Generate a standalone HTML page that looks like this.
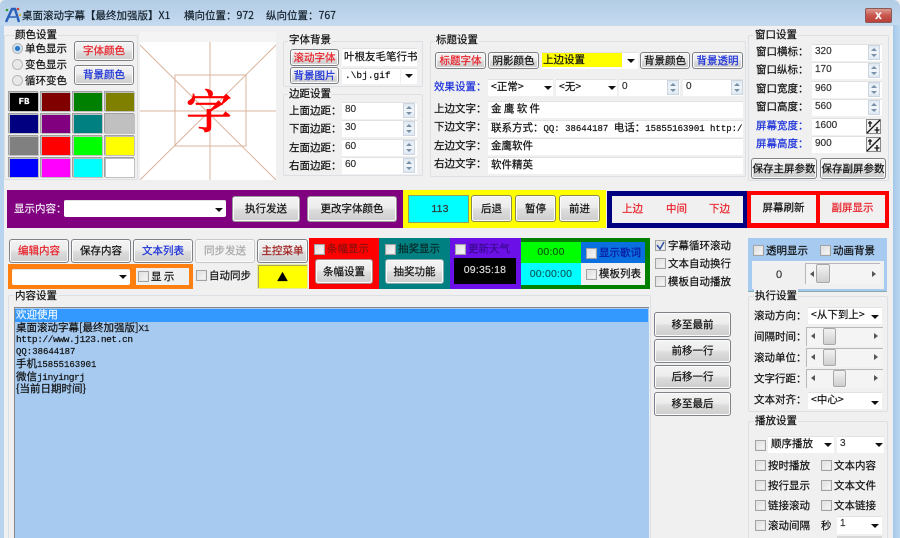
<!DOCTYPE html>
<html><head><meta charset="utf-8">
<style>
html,body{margin:0;padding:0;background:#fff}
#w{position:relative;width:900px;height:538px;overflow:hidden;background:#f0f0f0;font:10.5px/14px "Noto Sans CJK SC","WenQuanYi Zen Hei",sans-serif;color:#111;filter:blur(.3px);-webkit-text-stroke:.2px currentColor}
#w div,#w span.a{position:absolute;box-sizing:border-box;white-space:nowrap}
.tb{left:0;top:0;width:900px;height:26px;background:linear-gradient(#b3cde6,#bdd5ec 60%,#c4daef);border-radius:5px 7px 0 0}
.t{line-height:16px}
.g{border:1px solid #dcdfe3;border-radius:2px}
.lb{background:#f0f0f0;padding:0 1px;line-height:14px;height:14px}
.b{background:linear-gradient(#f3f3f3,#ececec 45%,#dcdcdc 55%,#cdcdcd);border:1px solid #7e8186;border-radius:3px;text-align:center;box-shadow:inset 0 0 0 1px #fbfbfb}
.r{color:#e8212a}.bl{color:#1a2fd8}
.i{background:#fff;box-shadow:inset 0 1px 0 #e2e2e2;padding-left:3px;overflow:hidden}
.n{font-family:"Liberation Sans",sans-serif;font-size:10px;color:#333}
.m{font-family:"Liberation Mono","Noto Sans CJK SC",monospace}
.sp{width:12px;height:15px;background:linear-gradient(#dfe8f2,#f2f6fa 48%,#a8b8c8 50%,#f2f6fa 52%,#dfe8f2);border:1px solid #ccd6e0}
.sp::before{content:"";position:absolute;left:2px;top:2px;border-left:3px solid transparent;border-right:3px solid transparent;border-bottom:3px solid #7890a8}
.sp::after{content:"";position:absolute;left:2px;bottom:2px;border-left:3px solid transparent;border-right:3px solid transparent;border-top:3px solid #7890a8}
.ar{width:0;height:0;border-left:4px solid transparent;border-right:4px solid transparent;border-top:4px solid #111}
.c{width:11px;height:11px;border:1px solid #a3a3a3;background:linear-gradient(135deg,#dcdcdc,#fafafa);box-shadow:inset 0 0 0 1px #e6e6e6;margin:1px 0 0 1px}
.rd{width:11px;height:11px;border-radius:50%;border:1px solid #b8b8b8;background:#e8e8e8;margin:1px 0 0 1px}
.s{background:#f4f4f4;box-shadow:inset 1px 1px 0 #b8b8b8}
.th{background:linear-gradient(#f2f2f2,#cfcfcf);border:1px solid #a8a8a8;border-radius:2px}
.sw{width:28px;height:18px;box-shadow:0 0 0 1px #c0c0c0,-1px -1px 0 1px #a0a0a0}
.d{font-family:"Liberation Sans",sans-serif;font-size:10.5px;letter-spacing:.2px;text-align:center}
</style></head><body><div id="w">
<div class="tb"></div>
<div style="left:0;top:25px;width:4px;height:513px;background:#b9d4ee"></div>
<div style="left:893px;top:25px;width:7px;height:513px;background:linear-gradient(90deg,#a4c8ea,#bcd8f0)"></div>
<svg style="position:absolute;left:4px;top:7px" width="18" height="16"><path d="M2 15L8 2L11 2L15 15" fill="none" stroke="#2a5fb8" stroke-width="2.4"/><path d="M5 10H12" stroke="#2a5fb8" stroke-width="1.5"/><circle cx="3" cy="3" r="1.3" fill="#3a9a3a"/><circle cx="14" cy="2" r="1.3" fill="#d0403a"/><circle cx="16" cy="8" r="1.2" fill="#d8b030"/></svg>
<div class="t" style="left:22px;top:8px;color:#14202c">桌面滚动字幕【最终加强版】X1</div>
<div class="t" style="left:184px;top:8px;color:#14202c">横向位置：972</div>
<div class="t" style="left:266px;top:8px;color:#14202c">纵向位置：767</div>
<div style="left:865px;top:8px;width:27px;height:15px;background:linear-gradient(#dc9a90,#c8564c 50%,#b8403a);border:1px solid #8a5a58;border-radius:2px;color:#fff;font:bold 12px/13px 'Liberation Sans',sans-serif;text-align:center">x</div>

<!-- 颜色设置 -->
<div class="g" style="left:4px;top:35px;width:134px;height:145px"></div>
<div class="lb" style="left:14px;top:28px">颜色设置</div>
<div class="rd" style="left:11px;top:42px;background:radial-gradient(#2a78c8 35%,#cfe0f0 45%)"></div>
<div class="rd" style="left:11px;top:58px"></div>
<div class="rd" style="left:11px;top:74px"></div>
<div class="t" style="left:25px;top:41px">单色显示</div>
<div class="t" style="left:25px;top:57px">变色显示</div>
<div class="t" style="left:25px;top:73px">循环变色</div>
<div class="b r" style="left:74px;top:41px;width:60px;height:20px;line-height:18px">字体颜色</div>
<div class="b bl" style="left:74px;top:65px;width:60px;height:20px;line-height:18px">背景颜色</div>
<div class="sw" style="left:10px;top:93px;background:#000;color:#fff;font:bold 9px/18px 'Liberation Mono',monospace;text-align:center">FB</div>
<div class="sw" style="left:42px;top:93px;background:#800000"></div>
<div class="sw" style="left:74px;top:93px;background:#008000"></div>
<div class="sw" style="left:106px;top:93px;background:#808000"></div>
<div class="sw" style="left:10px;top:115px;background:#000080"></div>
<div class="sw" style="left:42px;top:115px;background:#800080"></div>
<div class="sw" style="left:74px;top:115px;background:#008080"></div>
<div class="sw" style="left:106px;top:115px;background:#c0c0c0"></div>
<div class="sw" style="left:10px;top:137px;background:#808080"></div>
<div class="sw" style="left:42px;top:137px;background:#ff0000"></div>
<div class="sw" style="left:74px;top:137px;background:#00ff00"></div>
<div class="sw" style="left:106px;top:137px;background:#ffff00"></div>
<div class="sw" style="left:10px;top:159px;background:#0000ff"></div>
<div class="sw" style="left:42px;top:159px;background:#ff00ff"></div>
<div class="sw" style="left:74px;top:159px;background:#00ffff"></div>
<div class="sw" style="left:106px;top:159px;background:#fff"></div>

<!-- preview -->
<div style="left:140px;top:32px;width:136px;height:147px;background:#f4f4f4"></div>
<svg style="position:absolute;left:140px;top:42px" width="136" height="138"><rect width="136" height="138" fill="#fff"/><g stroke="#dbb49c" stroke-width="1" fill="none"><path d="M70 0V138M0 69H136M0 3L136 138M136 3L0 138"/><rect x="35" y="33" width="71" height="71"/></g></svg>
<div style="left:182px;top:75px;width:54px;height:68px;color:#f00;font:500 46px/68px 'Noto Serif CJK SC',serif;text-align:center;-webkit-text-stroke:.8px #f00">字</div>

<!-- 字体背景 -->
<div class="g" style="left:283px;top:41px;width:140px;height:46px"></div>
<div class="lb" style="left:288px;top:33px">字体背景</div>
<div class="b r" style="left:290px;top:49px;width:49px;height:17px;line-height:15px">滚动字体</div>
<div class="b bl" style="left:290px;top:67px;width:49px;height:17px;line-height:15px">背景图片</div>
<div class="i" style="left:342px;top:48px;width:75px;height:18px;line-height:17px;padding-left:2px">叶根友毛笔行书</div>
<div class="i m" style="left:342px;top:68px;width:58px;height:16px;line-height:15px;font-size:9.5px">.\bj.gif</div>
<div class="i" style="left:401px;top:68px;width:16px;height:16px"></div>
<div class="ar" style="left:405px;top:74px"></div>
<!-- 边距设置 -->
<div class="g" style="left:283px;top:94px;width:140px;height:82px"></div>
<div class="lb" style="left:288px;top:87px">边距设置</div>
<div class="t" style="left:289px;top:103px">上面边距：</div>
<div class="t" style="left:289px;top:121px">下面边距：</div>
<div class="t" style="left:289px;top:140px">左面边距：</div>
<div class="t" style="left:289px;top:158px">右面边距：</div>
<div class="i n" style="left:342px;top:102px;width:75px;height:17px;line-height:16px">80</div><div class="sp" style="left:403px;top:103px"></div>
<div class="i n" style="left:342px;top:120px;width:75px;height:17px;line-height:16px">30</div><div class="sp" style="left:403px;top:121px"></div>
<div class="i n" style="left:342px;top:139px;width:75px;height:17px;line-height:16px">60</div><div class="sp" style="left:403px;top:140px"></div>
<div class="i n" style="left:342px;top:157px;width:75px;height:17px;line-height:16px">60</div><div class="sp" style="left:403px;top:158px"></div>

<!-- 标题设置 -->
<div class="g" style="left:430px;top:41px;width:316px;height:136px"></div>
<div class="lb" style="left:435px;top:33px">标题设置</div>
<div class="b r" style="left:435px;top:52px;width:51px;height:17px;line-height:15px">标题字体</div>
<div class="b" style="left:488px;top:52px;width:51px;height:17px;line-height:15px">阴影颜色</div>
<div class="i" style="left:542px;top:52px;width:96px;height:17px"></div>
<div style="left:542px;top:53px;width:80px;height:14px;background:#ff0;line-height:14px;padding-left:1px">上边设置</div>
<div class="ar" style="left:627px;top:59px"></div>
<div class="b" style="left:640px;top:52px;width:50px;height:17px;line-height:15px">背景颜色</div>
<div class="b bl" style="left:692px;top:52px;width:51px;height:17px;line-height:15px">背景透明</div>
<div class="t bl" style="left:434px;top:79px">效果设置：</div>
<div class="i" style="left:488px;top:79px;width:65px;height:17px;line-height:16px">&lt;正常&gt;</div><div class="ar" style="left:544px;top:86px"></div>
<div class="i" style="left:556px;top:79px;width:61px;height:17px;line-height:16px">&lt;无&gt;</div><div class="ar" style="left:608px;top:86px"></div>
<div class="i n" style="left:619px;top:79px;width:61px;height:17px;line-height:16px">0</div><div class="sp" style="left:667px;top:80px"></div>
<div class="i n" style="left:683px;top:79px;width:60px;height:17px;line-height:16px">0</div><div class="sp" style="left:731px;top:80px"></div>
<div class="t" style="left:434px;top:101px">上边文字：</div>
<div class="t" style="left:434px;top:119px">下边文字：</div>
<div class="t" style="left:434px;top:138px">左边文字：</div>
<div class="t" style="left:434px;top:156px">右边文字：</div>
<div class="i" style="left:488px;top:101px;width:255px;height:17px;line-height:16px">金 鹰 软 件</div>
<div class="i" style="left:488px;top:120px;width:255px;height:17px;line-height:16px">联系方式：<span class="m" style="font-size:9px">QQ: 38644187 </span>电话：<span class="m" style="font-size:9px">15855163901 http:/.</span></div>
<div class="i" style="left:488px;top:138px;width:255px;height:17px;line-height:16px">金鹰软件</div>
<div class="i" style="left:488px;top:157px;width:255px;height:17px;line-height:16px">软件精英</div>

<!-- 窗口设置 -->
<div class="g" style="left:748px;top:35px;width:141px;height:146px"></div>
<div class="lb" style="left:754px;top:28px">窗口设置</div>
<div class="t" style="left:756px;top:44px">窗口横标：</div>
<div class="t" style="left:756px;top:62px">窗口纵标：</div>
<div class="t" style="left:756px;top:81px">窗口宽度：</div>
<div class="t" style="left:756px;top:99px">窗口高度：</div>
<div class="t bl" style="left:756px;top:118px">屏幕宽度：</div>
<div class="t bl" style="left:756px;top:136px">屏幕高度：</div>
<div class="i n" style="left:812px;top:44px;width:70px;height:17px;line-height:16px">320</div><div class="sp" style="left:868px;top:45px"></div>
<div class="i n" style="left:812px;top:62px;width:70px;height:17px;line-height:16px">170</div><div class="sp" style="left:868px;top:63px"></div>
<div class="i n" style="left:812px;top:81px;width:70px;height:17px;line-height:16px">960</div><div class="sp" style="left:868px;top:82px"></div>
<div class="i n" style="left:812px;top:99px;width:70px;height:17px;line-height:16px">560</div><div class="sp" style="left:868px;top:100px"></div>
<div class="i n" style="left:812px;top:118px;width:54px;height:17px;line-height:16px">1600</div>
<div class="i n" style="left:812px;top:136px;width:54px;height:17px;line-height:16px">900</div>
<svg style="position:absolute;left:866px;top:119px" width="15" height="15"><rect x=".5" y=".5" width="14" height="14" fill="#f0f0f0" stroke="#888"/><path d="M1 14L14 1M4 2V8M2 4H6M11 8V14M8.500 11H13.500" stroke="#111" fill="none" stroke-width="1.300"/></svg>
<svg style="position:absolute;left:866px;top:137px" width="15" height="15"><rect x=".5" y=".5" width="14" height="14" fill="#f0f0f0" stroke="#888"/><path d="M1 14L14 1M4 2V8M2 4H6M11 8V14M8.500 11H13.500" stroke="#111" fill="none" stroke-width="1.300"/></svg>
<div class="b" style="left:751px;top:158px;width:66px;height:21px;line-height:19px">保存主屏参数</div>
<div class="b" style="left:820px;top:158px;width:66px;height:21px;line-height:19px">保存副屏参数</div>

<!-- Row 1 -->
<div style="left:7px;top:190px;width:396px;height:38px;background:#800080"></div>
<div class="t" style="left:14px;top:201px;color:#f0e8f0">显示内容：</div>
<div class="i" style="left:64px;top:200px;width:162px;height:17px;border-radius:2px"></div><div class="ar" style="left:215px;top:208px"></div>
<div class="b" style="left:232px;top:196px;width:68px;height:26px;line-height:24px;border-color:#999">执行发送</div>
<div class="b" style="left:307px;top:196px;width:90px;height:26px;line-height:24px;border-color:#999">更改字体颜色</div>
<div style="left:403px;top:190px;width:203px;height:38px;background:#ff0"></div>
<div class="d" style="left:408px;top:195px;width:61px;height:28px;background:#0ff;border:1px solid #90a060;color:#333;line-height:26px;padding-left:3px">113</div>
<div class="b" style="left:471px;top:195px;width:41px;height:27px;line-height:25px;border-color:#8a8a50">后退</div>
<div class="b" style="left:515px;top:195px;width:41px;height:27px;line-height:25px;border-color:#8a8a50">暂停</div>
<div class="b" style="left:559px;top:195px;width:41px;height:27px;line-height:25px;border-color:#8a8a50">前进</div>
<div style="left:607px;top:191px;width:140px;height:37px;background:#f0f0f0;border:5px solid #000080;border-right-width:4px"></div>
<div class="t r" style="left:622px;top:201px">上边</div>
<div class="t r" style="left:666px;top:201px">中间</div>
<div class="t r" style="left:709px;top:201px">下边</div>
<div style="left:747px;top:191px;width:142px;height:37px;background:#f00"></div>
<div style="left:751px;top:195px;width:65px;height:28px;background:#f0f0f0;text-align:center;line-height:26px">屏幕刷新</div>
<div class="r" style="left:820px;top:195px;width:65px;height:28px;background:#f0f0f0;text-align:center;line-height:26px">副屏显示</div>

<!-- Row 2 -->
<div class="b r" style="left:9px;top:239px;width:60px;height:24px;line-height:22px">编辑内容</div>
<div class="b" style="left:71px;top:239px;width:60px;height:24px;line-height:22px">保存内容</div>
<div class="b bl" style="left:133px;top:239px;width:60px;height:24px;line-height:22px">文本列表</div>
<div class="b" style="left:195px;top:239px;width:60px;height:24px;line-height:22px;color:#a8a8a8;background:#f2f2f2;border-color:#c8c8c8">同步发送</div>
<div class="b" style="left:257px;top:239px;width:51px;height:24px;line-height:22px;color:#a02020">主控菜单</div>
<div style="left:8px;top:264px;width:185px;height:25px;background:#ff8010"></div>
<div class="i" style="left:12px;top:269px;width:118px;height:16px;border-radius:2px"></div><div class="ar" style="left:119px;top:275px"></div>
<div style="left:136px;top:268px;width:53px;height:17px;background:#f0f0f0"></div>
<div class="c" style="left:137px;top:270px"></div>
<div class="t" style="left:151px;top:269px">显 示</div>
<div class="c" style="left:195px;top:269px"></div>
<div class="t" style="left:209px;top:268px">自动同步</div>
<div style="left:257px;top:264px;width:51px;height:25px;background:#ff0;color:#000;text-align:center;font-size:11px;line-height:25px;border:1px solid #e8e8a0;box-shadow:inset 1px 1px 0 #a8a860">▲</div>
<div style="left:309px;top:238px;width:70px;height:51px;background:#f00"></div>
<div class="c" style="left:313px;top:243px"></div>
<div class="t" style="left:327px;top:241px;color:#8a1010">条幅显示</div>
<div class="b" style="left:315px;top:259px;width:58px;height:25px;line-height:23px;border-color:#a88">条幅设置</div>
<div style="left:379px;top:238px;width:71px;height:51px;background:#008080"></div>
<div class="c" style="left:384px;top:243px"></div>
<div class="t" style="left:398px;top:241px;color:#062a2a">抽奖显示</div>
<div class="b" style="left:385px;top:259px;width:59px;height:25px;line-height:23px;border-color:#8aa">抽奖功能</div>
<div style="left:450px;top:238px;width:71px;height:51px;background:#6c10e8"></div>
<div class="c" style="left:454px;top:243px"></div>
<div class="t" style="left:468px;top:241px;color:#3a0a90">更新天气</div>
<div class="d" style="left:454px;top:258px;width:62px;height:26px;background:#000;color:#d8d8d8;line-height:25px">09:35:18</div>
<div style="left:521px;top:238px;width:129px;height:51px;background:#008000"></div>
<div class="d" style="left:521px;top:242px;width:60px;height:21px;background:#0f0;color:#086008;line-height:21px">00:00</div>
<div class="d" style="left:521px;top:263px;width:60px;height:22px;background:#0ff;color:#086060;line-height:22px">00:00:00</div>
<div style="left:581px;top:242px;width:64px;height:21px;background:#0a70e0"></div>
<div style="left:581px;top:263px;width:64px;height:22px;background:#f0f0f0"></div>
<div class="c" style="left:585px;top:247px"></div>
<div class="t" style="left:599px;top:245px;color:#0a1aa0">显示歌词</div>
<div class="c" style="left:585px;top:268px"></div>
<div class="t" style="left:599px;top:266px">模板列表</div>
<div class="c" style="left:654px;top:239px"></div>
<svg style="position:absolute;left:654px;top:239px" width="13" height="13"><path d="M3 6L6 10L10 3" stroke="#3050a0" stroke-width="1.500" fill="none"/></svg>
<div class="t" style="left:668px;top:238px">字幕循环滚动</div>
<div class="c" style="left:654px;top:257px"></div>
<div class="t" style="left:668px;top:256px">文本自动换行</div>
<div class="c" style="left:654px;top:275px"></div>
<div class="t" style="left:668px;top:274px">模板自动播放</div>
<div style="left:748px;top:238px;width:139px;height:54px;background:#a6caf0;border-bottom:1px solid #8aa"></div>
<div class="c" style="left:752px;top:244px"></div>
<div class="t" style="left:766px;top:243px">透明显示</div>
<div class="c" style="left:819px;top:244px"></div>
<div class="t" style="left:833px;top:243px">动画背景</div>
<div style="left:752px;top:261px;width:132px;height:28px;background:#f0f0f0"></div>
<div class="t n" style="left:776px;top:267px;font-size:11px">0</div>
<div class="s" style="left:805px;top:263px;width:75px;height:21px"></div>
<div class="th" style="left:816px;top:264px;width:14px;height:19px"></div>
<div style="left:810px;top:271px;border:3px solid transparent;border-right:4px solid #555;border-left:0"></div>
<div style="left:872px;top:271px;border:3px solid transparent;border-left:4px solid #555;border-right:0"></div>

<!-- 内容设置 -->
<div class="g" style="left:8px;top:295px;width:643px;height:250px"></div>
<div class="lb" style="left:14px;top:289px">内容设置</div>
<div style="left:14px;top:307px;width:635px;height:240px;background:#a6caf0;box-shadow:inset 1px 1px 0 #888"></div>
<div style="left:15px;top:309px;width:633px;height:13px;background:#3399ff"></div>
<div class="t" style="left:16px;top:308px;line-height:14px;color:#e8f4ff">欢迎使用</div>
<div class="t" style="left:16px;top:321px;line-height:14px">桌面滚动字幕[最终加强版]<span class="m" style="font-size:9px">X1</span></div>
<div class="t m" style="left:16px;top:333px;line-height:14px;font-size:9.5px;letter-spacing:-.4px">http://www.j123.net.cn</div>
<div class="t m" style="left:16px;top:345px;line-height:14px;font-size:9px">QQ:38644187</div>
<div class="t" style="left:16px;top:357px;line-height:14px">手机<span class="m" style="font-size:9px">15855163901</span></div>
<div class="t" style="left:16px;top:370px;line-height:14px">微信<span class="m" style="font-size:9.5px;letter-spacing:-.4px">jinyingrj</span></div>
<div class="t" style="left:16px;top:382px;line-height:14px">{当前日期时间}</div>
<div class="b" style="left:654px;top:312px;width:77px;height:25px;line-height:23px">移至最前</div>
<div class="b" style="left:654px;top:339px;width:77px;height:24px;line-height:22px">前移一行</div>
<div class="b" style="left:654px;top:365px;width:77px;height:24px;line-height:22px">后移一行</div>
<div class="b" style="left:654px;top:392px;width:77px;height:24px;line-height:22px">移至最后</div>

<!-- 执行设置 -->
<div class="g" style="left:748px;top:296px;width:140px;height:116px"></div>
<div class="lb" style="left:754px;top:289px">执行设置</div>
<div class="t" style="left:754px;top:308px">滚动方向：</div>
<div class="t" style="left:754px;top:329px">间隔时间：</div>
<div class="t" style="left:754px;top:350px">滚动单位：</div>
<div class="t" style="left:754px;top:371px">文字行距：</div>
<div class="t" style="left:754px;top:392px">文本对齐：</div>
<div class="i" style="left:808px;top:307px;width:74px;height:17px;line-height:16px">&lt;从下到上&gt;</div><div class="ar" style="left:871px;top:315px"></div>
<div class="s" style="left:806px;top:327px;width:77px;height:19px"></div><div class="th" style="left:823px;top:328px;width:13px;height:17px"></div>
<div class="s" style="left:806px;top:348px;width:77px;height:19px"></div><div class="th" style="left:823px;top:349px;width:13px;height:17px"></div>
<div class="s" style="left:806px;top:369px;width:77px;height:19px"></div><div class="th" style="left:833px;top:370px;width:13px;height:17px"></div>
<div style="left:811px;top:333px;border:3px solid transparent;border-right:4px solid #555;border-left:0"></div><div style="left:874px;top:333px;border:3px solid transparent;border-left:4px solid #555;border-right:0"></div>
<div style="left:811px;top:354px;border:3px solid transparent;border-right:4px solid #555;border-left:0"></div><div style="left:874px;top:354px;border:3px solid transparent;border-left:4px solid #555;border-right:0"></div>
<div style="left:811px;top:375px;border:3px solid transparent;border-right:4px solid #555;border-left:0"></div><div style="left:874px;top:375px;border:3px solid transparent;border-left:4px solid #555;border-right:0"></div>
<div class="i" style="left:808px;top:392px;width:74px;height:17px;line-height:16px">&lt;中心&gt;</div><div class="ar" style="left:871px;top:401px"></div>

<!-- 播放设置 -->
<div class="g" style="left:748px;top:421px;width:140px;height:125px"></div>
<div class="lb" style="left:754px;top:414px">播放设置</div>
<div class="c" style="left:754px;top:439px"></div>
<div class="i" style="left:768px;top:436px;width:66px;height:17px;line-height:16px;padding-left:3px">顺序播放</div><div class="ar" style="left:824px;top:443px"></div>
<div class="i n" style="left:837px;top:436px;width:47px;height:17px;line-height:15px">3</div><div class="ar" style="left:875px;top:443px"></div>
<div class="c" style="left:754px;top:459px"></div><div class="t" style="left:768px;top:458px">按时播放</div>
<div class="c" style="left:820px;top:459px"></div><div class="t" style="left:834px;top:458px">文本内容</div>
<div class="c" style="left:754px;top:479px"></div><div class="t" style="left:768px;top:478px">按行显示</div>
<div class="c" style="left:820px;top:479px"></div><div class="t" style="left:834px;top:478px">文本文件</div>
<div class="c" style="left:754px;top:499px"></div><div class="t" style="left:768px;top:498px">链接滚动</div>
<div class="c" style="left:820px;top:499px"></div><div class="t" style="left:834px;top:498px">文本链接</div>
<div class="c" style="left:754px;top:519px"></div><div class="t" style="left:768px;top:518px">滚动间隔</div>
<div class="t" style="left:821px;top:518px">秒</div>
<div class="i n" style="left:837px;top:516px;width:45px;height:18px;line-height:15px">1</div><div class="ar" style="left:871px;top:524px"></div>
<div style="left:837px;top:536px;width:45px;height:2px;background:#d8d8d8"></div>
</div></body></html>
